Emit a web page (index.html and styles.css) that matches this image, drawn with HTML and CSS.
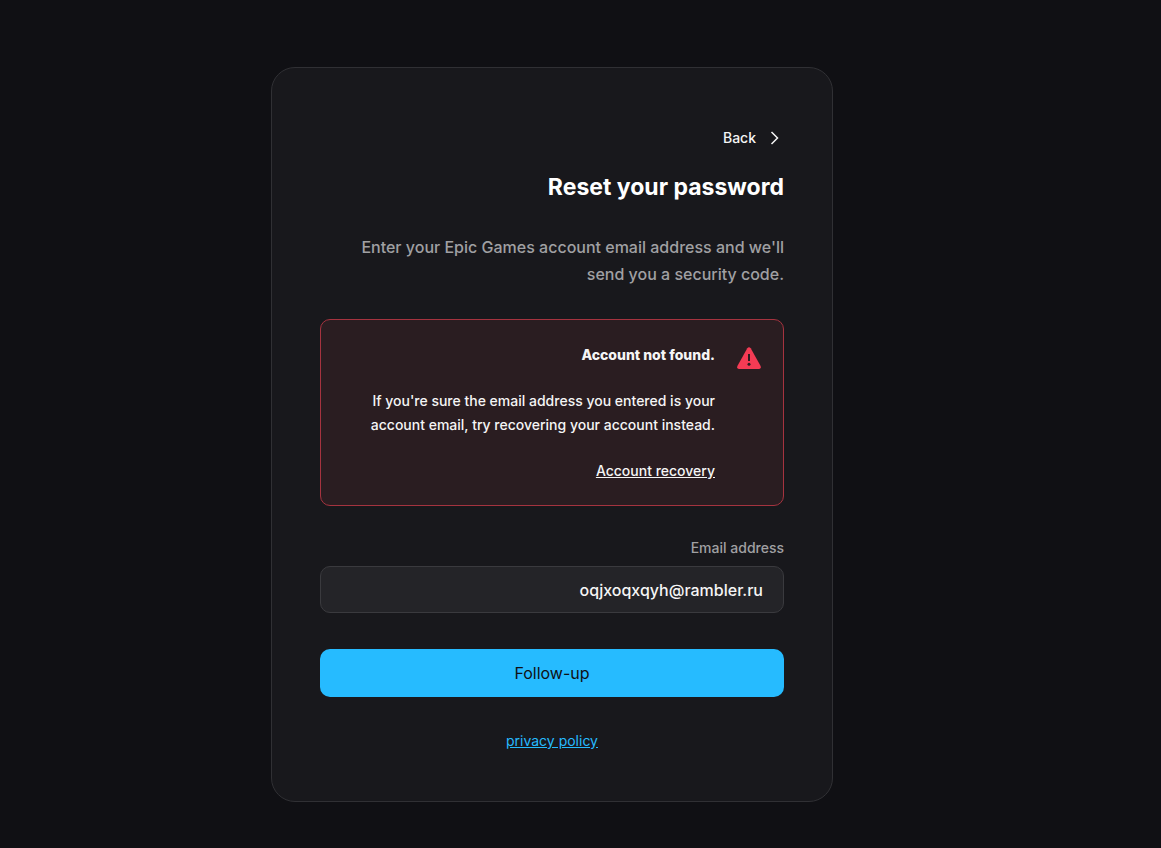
FILE: index.html
```html
<!DOCTYPE html>
<html lang="en">
<head>
  <meta charset="UTF-8">
  <meta name="viewport" content="width=device-width, initial-scale=1.0">
  <title>Reset your password</title>
  <link rel="stylesheet" href="styles.css">
</head>
<body>
  <main class="page">
    <form class="card">
<!--BACK BUTTON-->
      <button class="back" type="button">
        Back
        <svg class="back-icon" viewBox="0 0 10 16" aria-hidden="true">
          <path d="M1.5 2l6 6-6 6" fill="none" stroke="currentColor" stroke-width="1.5"/>
        </svg>
      </button>

      <h1>Reset your password</h1>
      <p class="intro">Enter your Epic Games account email address and we'll send you a security code.</p>

<!--ERROR MESSAGE-->
      <div class="alert" role="alert">
        <div class="alert-text">
          <h2>Account not found.</h2>
          <p>If you're sure the email address you entered is your account email, try recovering your account instead.</p>
          <a href="#">Account recovery</a>
        </div>
        <svg class="alert-icon" viewBox="0 0 24 22" aria-hidden="true">
          <path d="M10.3 1.3Q12-1 13.7 1.3L23.6 19Q24.4 22 22 22H2Q-.4 22 .4 19Z" fill="#f43b54"/>
          <path d="M11 7h2v7h-2z" fill="#2b1d21"/>
          <circle cx="12" cy="17.3" r="1.5" fill="#2b1d21"/>
        </svg>
      </div>

<!--EMAIL-->
      <label for="email">Email address</label>
      <input class="email" id="email" type="email" value="oqjxoqxqyh@rambler.ru">

      <button class="submit" type="submit">Follow-up</button>
      <a class="privacy" href="#">privacy policy</a>
    </form>
  </main>
</body>
</html>
```
FILE: styles.css
```css
* {
  box-sizing: border-box;
}
body {
  margin: 0;
  background-color: #101014;
  color: #f5f5f5;
  font-family: Inter, sans-serif;
}
h1, h2, p {
  margin: 0;
}
button, input {
  font-family: inherit;
}
.page {
  display: flex;
  justify-content: center;
  padding: 67px 57px 46px 0;
}
.card {
  display: flex;
  flex-direction: column;
  width: 100%;
  max-width: 562px;
  padding: 58px 48px 48px;
  background-color: #18181c;
  border: 1px solid #303034;
  border-radius: 24px;
  text-align: right;
}
.back {
  display: flex;
  align-items: center;
  align-self: flex-end;
  gap: 14px;
  padding: 0 4px 0 0;
  background: none;
  border: none;
  color: #f5f5f5;
  font-size: 14px;
  font-weight: 500;
  line-height: 24px;
  cursor: pointer;
}
.back-icon {
  width: 10px;
  height: 16px;
}
h1 {
  margin-top: 21px;
  color: #fff;
  font-size: 23px;
  font-weight: 700;
  line-height: 32px;
}
.intro {
  margin-top: 31px;
  color: #a0a0a3;
  font-size: 16px;
  font-weight: 500;
  line-height: 27px;
}
.alert {
  display: flex;
  justify-content: flex-end;
  gap: 22px;
  margin-top: 31px;
  padding: 23px 22px 22px;
  background-color: #2a1d21;
  border: 1px solid #a5333f;
  border-radius: 10px;
  font-size: 14px;
  font-weight: 500;
  line-height: 24px;
}
.alert-text h2 {
  font-size: 14px;
  font-weight: 800;
}
.alert-text p {
  margin: 22px 0;
}
.alert-text a {
  color: inherit;
}
.alert-icon {
  flex-shrink: 0;
  width: 24px;
  height: 22px;
  margin-top: 4px;
}
label {
  margin-top: 30px;
  color: #a0a0a3;
  font-size: 14px;
  font-weight: 500;
  line-height: 24px;
}
.email {
  width: 100%;
  height: 47px;
  margin-top: 6px;
  padding: 0 20px;
  background-color: #242428;
  border: 1px solid #3a3a3e;
  border-radius: 10px;
  color: #f5f5f5;
  font-size: 16px;
  font-weight: 500;
  text-align: right;
}
.submit {
  height: 48px;
  margin-top: 36px;
  background-color: #26bbff;
  border: none;
  border-radius: 10px;
  color: #101014;
  font-size: 16px;
  font-weight: 400;
  cursor: pointer;
}
.submit:hover {
  background-color: #72d3ff;
}
.privacy {
  align-self: center;
  margin-top: 32px;
  color: #26bbff;
  font-size: 14px;
  line-height: 24px;
}
```
